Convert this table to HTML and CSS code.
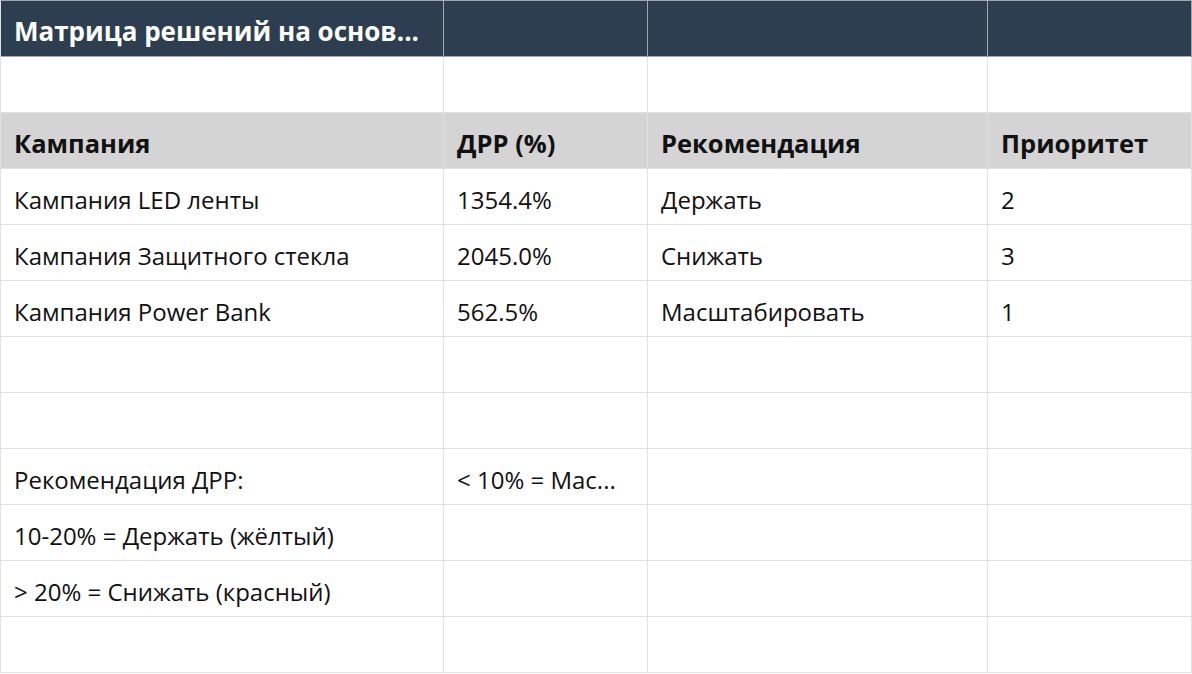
FILE: index.html
```html
<!DOCTYPE html>
<html lang="ru">
<head>
<meta charset="utf-8">
<title>Матрица решений</title>
<link rel="stylesheet" href="styles.css">
</head>
<body>
<div class="sheet">
  <div class="cell title">Матрица решений на основ...</div>
  <div class="cell title"></div>
  <div class="cell title"></div>
  <div class="cell title"></div>

  <div class="cell"></div><div class="cell"></div><div class="cell"></div><div class="cell"></div>

  <div class="cell head">Кампания</div>
  <div class="cell head">ДРР (%)</div>
  <div class="cell head">Рекомендация</div>
  <div class="cell head">Приоритет</div>

  <div class="cell">Кампания LED ленты</div>
  <div class="cell">1354.4%</div>
  <div class="cell">Держать</div>
  <div class="cell">2</div>

  <div class="cell">Кампания Защитного стекла</div>
  <div class="cell">2045.0%</div>
  <div class="cell">Снижать</div>
  <div class="cell">3</div>

  <div class="cell">Кампания Power Bank</div>
  <div class="cell">562.5%</div>
  <div class="cell">Масштабировать</div>
  <div class="cell">1</div>

  <div class="cell"></div><div class="cell"></div><div class="cell"></div><div class="cell"></div>
  <div class="cell"></div><div class="cell"></div><div class="cell"></div><div class="cell"></div>

  <div class="cell">Рекомендация ДРР:</div>
  <div class="cell">&lt; 10% = Мас...</div>
  <div class="cell"></div>
  <div class="cell"></div>

  <div class="cell">10-20% = Держать (жёлтый)</div>
  <div class="cell"></div><div class="cell"></div><div class="cell"></div>

  <div class="cell">&gt; 20% = Снижать (красный)</div>
  <div class="cell"></div><div class="cell"></div><div class="cell"></div>

  <div class="cell"></div><div class="cell"></div><div class="cell"></div><div class="cell"></div>
</div>
</body>
</html>
```

FILE: styles.css
```css
* { box-sizing: border-box; }
html, body {
  margin: 0;
  padding: 0;
  background: #ffffff;
}
body {
  font-family: "Open Sans", "Noto Sans", sans-serif;
  color: #111111;
}
.sheet {
  display: grid;
  grid-template-columns: 443px 204px 340px 204px;
  grid-auto-rows: 56px;
  border-left: 1px solid #e1e1e1;
  border-top: 1px solid #a3a8ad;
  width: 1192px;
}
.cell {
  border-right: 1px solid #e1e1e1;
  border-bottom: 1px solid #e1e1e1;
  padding: 0 12px 0 13px;
  font-size: 24px;
  line-height: 61px;
  white-space: nowrap;
  overflow: hidden;
  min-width: 0;
}
.cell.title {
  background: #2d3e50;
  color: #ffffff;
  font-weight: 700;
  font-size: 26px;
  line-height: 60px;
  border-right-color: #a3a8ad;
  border-bottom-color: #a3a8ad;
}
.cell.head {
  background: #d4d4d4;
  font-weight: 700;
  font-size: 25.5px;
  line-height: 60px;
}
```
